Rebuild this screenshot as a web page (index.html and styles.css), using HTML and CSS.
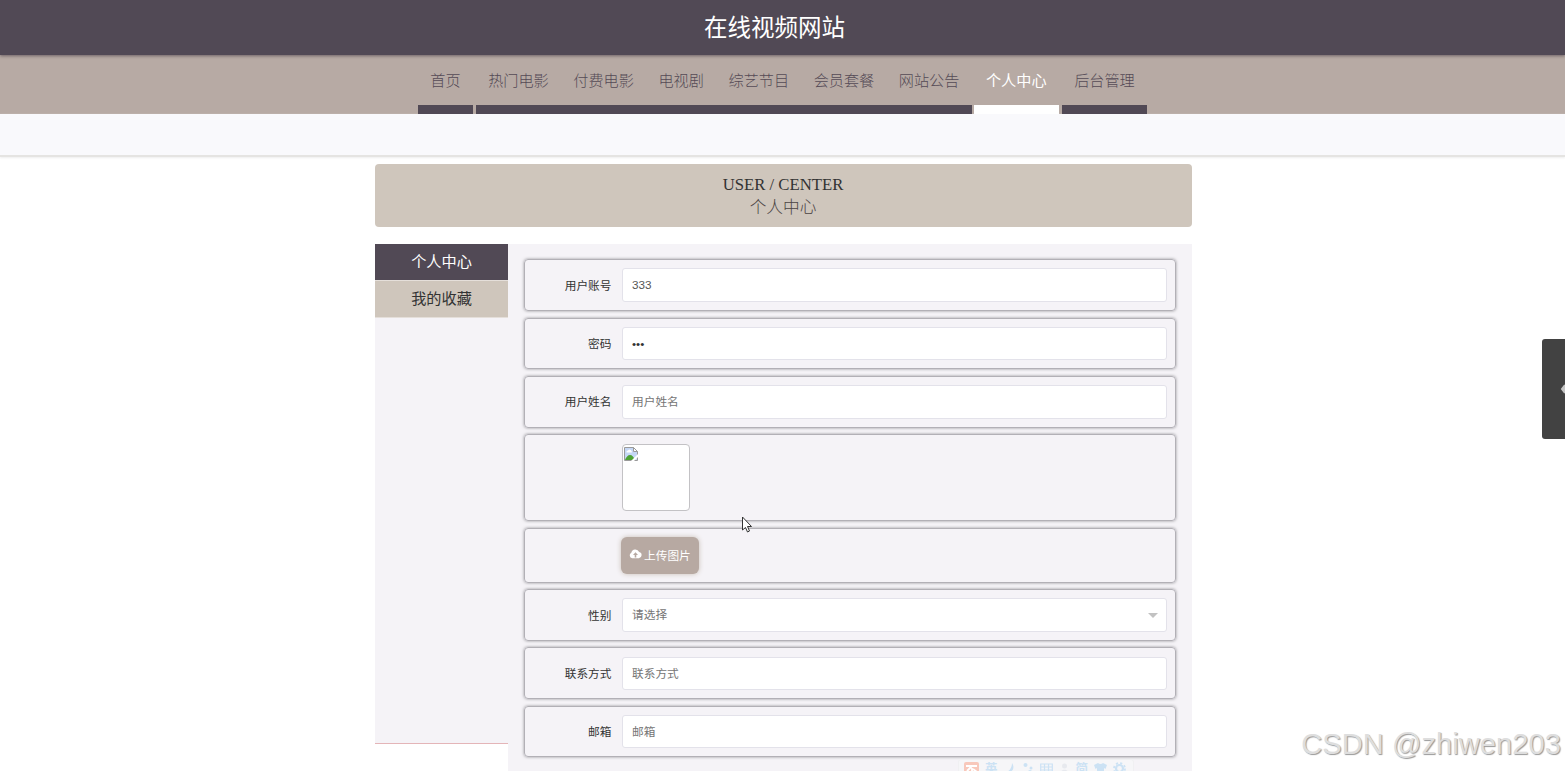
FILE: index.html
```html
<!DOCTYPE html>
<html lang="zh-CN">
<head>
    <meta charset="UTF-8">
    <meta name="viewport" content="width=device-width, initial-scale=1.0">
    <title>个人中心</title>
    <link rel="stylesheet" href="styles.css">
</head>
<body>
    <header class="header">在线视频网站</header>

    <nav class="nav">
        <a class="nav-item home">首页</a>
        <a class="nav-item">热门电影</a>
        <a class="nav-item">付费电影</a>
        <a class="nav-item">电视剧</a>
        <a class="nav-item">综艺节目</a>
        <a class="nav-item">会员套餐</a>
        <a class="nav-item">网站公告</a>
        <a class="nav-item active">个人中心</a>
        <a class="nav-item">后台管理</a>
    </nav>
    <div class="sub-bar"></div>

    <div class="banner">
        <div class="banner-en">USER / CENTER</div>
        <div class="banner-cn">个人中心</div>
    </div>

    <div class="container">
        <div class="side">
            <a class="side-item active">个人中心</a>
            <a class="side-item">我的收藏</a>
        </div>
        <div class="form">
            <div class="row">
                <label class="label">用户账号</label>
                <div class="input filled">333</div>
            </div>
            <div class="row">
                <label class="label">密码</label>
                <div class="input filled password">•••</div>
            </div>
            <div class="row">
                <label class="label">用户姓名</label>
                <div class="input">用户姓名</div>
            </div>
            <div class="row row-photo">
                <label class="label"></label>
                <div class="photo">
                    <svg width="14" height="14" viewBox="0 0 14 14">
                        <path d="M.5.5h9l4 4v9H.5z" fill="#c5d7f5"/>
                        <path d="M2.500 5.500a1.600 1.600 0 0 1 1.500-2 2 2 0 0 1 3.600.7 1 1 0 0 1 .2 1.300z" fill="#fff"/>
                        <path d="M1 13c1-3 3-5 5-5s4 2 5 5z" fill="#4ea334"/>
                        <path d="M.5.5h9l4 4v9H.5z" fill="none" stroke="#9a9a9a"/>
                        <path d="M9.500.5v4h4z" fill="#fff" stroke="#9a9a9a"/>
                        <path d="M7 14l7-7v3l-4 4z" fill="#fff"/>
                    </svg>
                </div>
            </div>
            <div class="row row-upload">
                <label class="label"></label>
                <div class="upload">
                    <svg width="13" height="10" viewBox="0 0 13 10">
                        <path d="M3.200 9.300A3 3 0 0 1 2.300 3.700 4.100 4.100 0 0 1 10.100 3a3.200 3.200 0 0 1-.3 6.300z" fill="#fff"/>
                        <path d="M6.500 3.200L9 6H7.300v2.400H5.700V6H4z" fill="#b7a9a2"/>
                    </svg>
                    <span>上传图片</span>
                </div>
            </div>
            <div class="row">
                <label class="label">性别</label>
                <div class="input select">请选择</div>
            </div>
            <div class="row">
                <label class="label">联系方式</label>
                <div class="input">联系方式</div>
            </div>
            <div class="row">
                <label class="label">邮箱</label>
                <div class="input">邮箱</div>
            </div>
        </div>
    </div>

    <div class="drawer">
        <svg width="5" height="12" viewBox="0 0 5 12">
            <path d="M5 2L2 6l3 4" fill="#c4c4c4" stroke="#c4c4c4" stroke-width="2"/>
        </svg>
    </div>

    <div class="ime">
        <svg width="15" height="15" viewBox="0 0 15 15">
            <rect width="15" height="15" rx="2" fill="#f8c8bb"/>
            <path d="M2 4h11M8 4L3 9M8 6v7M9 7l4 3" stroke="#fff" stroke-width="1.800" fill="none"/>
        </svg>
        <span>英</span>
        <svg width="13" height="13" viewBox="0 0 13 13"><path d="M8 1c4 6-1 11-7 9 4 0 7-4 7-9z" fill="#cce2f4"/></svg>
        <svg width="11" height="13" viewBox="0 0 11 13"><g fill="#cce2f4"><circle cx="2.500" cy="3" r="2"/><circle cx="8" cy="6" r="1.500"/><circle cx="7" cy="10" r="2"/></g></svg>
        <svg width="13" height="13" viewBox="0 0 13 13"><path d="M.7 2h11.600v9H.7zM1 5h11M1 8h11M4.500 2v9M8.500 2v9" fill="none" stroke="#cce2f4" stroke-width="1.200"/></svg>
        <svg width="11" height="13" viewBox="0 0 11 13"><g fill="#e7e9ee"><circle cx="5.500" cy="4" r="2.500"/><path d="M1 13c0-7 9-7 9 0z"/></g></svg>
        <span>简</span>
        <svg width="13" height="13" viewBox="0 0 13 13"><path d="M4 1q2.500 2 5 0l4 2-1.500 4L10 6v7H3V6L1.500 7 0 3z" fill="#cce2f4"/></svg>
        <svg width="13" height="13" viewBox="0 0 13 13"><circle cx="6.500" cy="6.500" r="3.500" fill="none" stroke="#cce2f4" stroke-width="2.200"/><circle cx="6.500" cy="6.500" r="5.500" fill="none" stroke="#cce2f4" stroke-width="1.800" stroke-dasharray="2.160"/></svg>
    </div>

    <svg class="cursor" width="12" height="18" viewBox="0 0 12 18">
        <path d="M1.500 1v13l3-2.500 2 4.500 2-1-2-4.500h4z" fill="#fff" stroke="#333" stroke-width="1"/>
    </svg>
    <div class="watermark">CSDN @zhiwen203</div>
</body>
</html>
```

FILE: styles.css
```css
* {
    box-sizing: border-box;
}

body {
    margin: 0;
    height: 771px;
    overflow: hidden;
    background: #fff;
    color: #333;
    font-family: "Liberation Sans", "Noto Sans CJK SC", sans-serif;
    font-size: 11.7px;
}

.header {
    position: relative;
    height: 55px;
    padding-right: 16px;
    background: #514955;
    box-shadow: 0 1px 3px rgba(60, 50, 60, .6);
    color: #fff;
    font-size: 23.5px;
    line-height: 57px;
    text-align: center;
}

.nav {
    display: flex;
    justify-content: center;
    height: 59px;
    background: #b7aaa4;
}

.nav-item {
    height: 59px;
    padding: 0 12.3px;
    border-bottom: 9px solid #514955;
    color: #554a56;
    font-size: 15.15px;
    font-weight: 300;
    line-height: 51px;
}

.nav-item.home {
    margin-right: 3px;
}

.nav-item.active {
    margin: 0 3px 0 2px;
    border-color: #fff;
    color: #fff;
    font-weight: normal;
}

.sub-bar {
    height: 43px;
    background: #f9f9fc;
    border-bottom: 2px solid #e5e4e2;
    box-shadow: 0 1px 2px #eee;
}

.banner {
    width: 817px;
    height: 63px;
    margin: 7px auto 17px 375px;
    padding-top: 9px;
    border-radius: 4px;
    background: #cfc6bc;
    font-family: "Liberation Serif", "Noto Sans CJK SC", serif;
    font-size: 16.7px;
    line-height: 23px;
    text-align: center;
}

.banner-en,
.banner-cn {
    padding-right: 1px;
}

.banner-cn {
    color: #4b4444;
    font-weight: 300;
}

.container {
    display: flex;
    align-items: flex-start;
    width: 817px;
    margin-left: 375px;
}

.side {
    width: 133px;
    height: 500px;
    border-bottom: 1px solid #e4b5b8;
    background: #f5f3f7;
}

.side-item {
    display: block;
    height: 37px;
    border-bottom: 1px solid #e5dfda;
    background: #cfc6bc;
    font-size: 15.2px;
    line-height: 36px;
    text-align: center;
}

.side-item.active {
    background: #514955;
    color: #fff;
}

.form {
    flex: 1;
    display: flex;
    flex-direction: column;
    gap: 6.7px;
    height: 560px;
    padding: 15.4px 16px 0;
    background: #f5f3f7;
}

.row {
    display: flex;
    flex: none;
    align-items: center;
    height: 51.6px;
    padding-right: 8px;
    border: 1px solid #b2b0b6;
    border-radius: 4px;
    box-shadow: 0 0 3px rgba(80, 80, 85, .6);
}

.row-photo {
    height: 86.8px;
}

.row-upload {
    height: 54.8px;
}

.label {
    width: 97px;
    padding: 0 10.5px 2px 0;
    text-align: right;
}

.input {
    position: relative;
    flex: 1;
    height: 33.5px;
    padding-left: 9px;
    border: 1px solid #e3e2ea;
    border-radius: 3px;
    background: #fff;
    color: #757575;
    line-height: 31px;
}

.input.filled {
    color: #555;
}

.input.password {
    color: #333;
}

.select::after {
    content: "";
    position: absolute;
    top: 14px;
    right: 8px;
    border: 5px solid transparent;
    border-top-color: #c2c2c2;
    border-bottom: none;
}

.photo {
    width: 67.5px;
    height: 67.5px;
    padding: 2px 1px;
    border: 1px solid #c3c2c5;
    border-radius: 4px;
    background: #fff;
}

.photo svg {
    display: block;
}

.upload {
    display: flex;
    align-items: center;
    justify-content: center;
    gap: 2px;
    width: 78px;
    height: 37px;
    margin-left: -.6px;
    padding: 0 1px 2px 0;
    border-radius: 6px;
    background: #b7a9a2;
    box-shadow: 0 0 5px #c9bfb6;
    color: #fff;
}

.drawer {
    position: absolute;
    top: 339px;
    right: 0;
    display: flex;
    align-items: center;
    justify-content: flex-end;
    width: 23px;
    height: 100px;
    border-radius: 3px 0 0 3px;
    background: #424242;
}

.ime {
    position: absolute;
    top: 759px;
    left: 958px;
    display: flex;
    gap: 6px;
    width: 176px;
    height: 24px;
    padding: 2px 5px;
    border: 1px solid #f0f0f2;
    border-radius: 3px;
    background: #f6f6f8;
    color: #cce2f4;
    font-size: 12.5px;
    font-weight: bold;
    line-height: 15px;
}

.ime svg {
    flex: none;
}

.cursor {
    position: absolute;
    top: 516px;
    left: 741px;
}

.watermark {
    position: absolute;
    top: 726px;
    right: 4px;
    color: #dedede;
    font-size: 29px;
    letter-spacing: .1px;
    line-height: 36px;
    text-shadow: 1px 1px 1px #999;
    white-space: nowrap;
}
```
